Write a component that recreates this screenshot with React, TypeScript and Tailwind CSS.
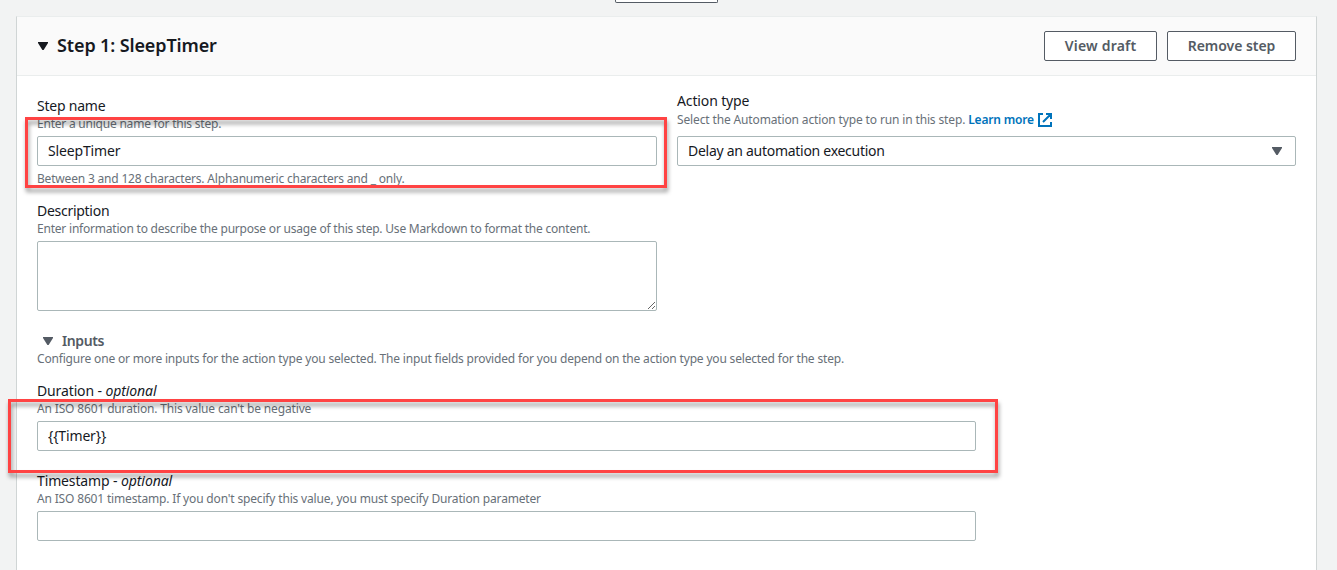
import type { ReactNode } from "react";

function Caret({ className }: { className: string }) {
  return (
    <svg viewBox="0 0 10 8" width="10" height="8" className={className} fill="currentColor" aria-hidden="true">
      <path d="M0 0h10v1L5.6 8H4.4L0 1z" />
    </svg>
  );
}

function Label({ children, optional, className = "tracking-[-0.13px]" }: { children: ReactNode; optional?: boolean; className?: string }) {
  return (
    <div className={`h-[18px] whitespace-nowrap text-[14px] leading-[18px] text-[#16191f] ${className}`}>
      {children}
      {optional && (
        <span className="tracking-[-0.1px]">
          {" - "}
          <i>optional</i>
        </span>
      )}
    </div>
  );
}

function Hint({ children, className = "tracking-[-0.2px]" }: { children: ReactNode; className?: string }) {
  return (
    <div className={`h-[18px] whitespace-nowrap text-[12px] leading-[18px] text-[#687078] ${className}`}>{children}</div>
  );
}

function TextInput({ value }: { value: string }) {
  return (
    <input
      defaultValue={value}
      className="mt-[3px] block h-[30px] w-full rounded-[2px] border border-[#aab7b8] bg-white px-[10px] pb-[2px] text-[14px] tracking-[-0.15px] text-[#16191f] outline-none"
    />
  );
}

function ActionButton({ children, className }: { children: ReactNode; className: string }) {
  return (
    <button
      className={`h-[30px] whitespace-nowrap rounded-[2px] border border-[#545b64] bg-white text-[14px] font-semibold leading-[28px] text-[#545b64] ${className}`}
    >
      {children}
    </button>
  );
}

export default function App() {
  return (
    <div className="relative h-[570px] w-[1337px] overflow-hidden bg-[#f2f3f3] font-['Noto_Sans','Open_Sans',sans-serif]">
      <div className="ml-[615px] h-[3px] w-[103px] rounded-b-[2px] border border-t-0 border-[#545b64] bg-white" />
      <section className="ml-4 mt-[13px] h-[600px] w-[1301px] border border-[#d0d5d5] border-t-[#eaeded] bg-white">
        <header className="flex h-[59px] items-center border-b border-[#eaeded] bg-[#fafafa] pl-[21px] pr-5">
          <Caret className="text-[#16191f]" />
          <h2 className="mb-[2px] ml-[9px] whitespace-nowrap text-[18px] font-semibold leading-[22px] tracking-[-0.12px] text-[#16191f]">Step 1: SleepTimer</h2>
          <div className="ml-auto flex gap-[10px]">
            <ActionButton className="w-[113px] tracking-[0.2px]">View draft</ActionButton>
            <ActionButton className="w-[129px] tracking-[-0.05px]">Remove step</ActionButton>
          </div>
        </header>

        <div className="pl-5 pr-5">
          <div className="flex gap-5">
            <div className="w-[620px] pt-[21px]">
              <Label className="tracking-[-0.22px]">Step name</Label>
              <Hint className="tracking-[-0.22px]">Enter a unique name for this step.</Hint>
              <TextInput value="SleepTimer" />
              <div className="mt-1">
                <Hint className="tracking-[-0.19px]">Between 3 and 128 characters. Alphanumeric characters and _ only.</Hint>
              </div>
              <div className="mt-[14px]">
                <Label className="tracking-[-0.28px]">Description</Label>
                <Hint className="tracking-[-0.21px]">
                  Enter information to describe the purpose or usage of this step. Use Markdown to format the content.
                </Hint>
                <textarea className="mt-[3px] block h-[70px] w-full resize rounded-[2px] border border-[#aab7b8] bg-white outline-none" />
              </div>
            </div>
            <div className="w-[619px] pt-4">
              <Label>Action type</Label>
              <div className="mt-px flex items-center">
                <Hint className="tracking-[-0.14px]">Select the Automation action type to run in this step.</Hint>
                <a className="ml-[3px] flex h-[18px] items-center whitespace-nowrap text-[12px] font-semibold leading-[18px] tracking-[-0.18px] text-[#0073bb]">
                  Learn more
                  <svg width="14" height="14" viewBox="0 0 14 14" className="ml-1" fill="none" stroke="currentColor" strokeWidth="2" aria-hidden="true">
                    <path d="M5 1H1v12h12V9M8 1h5v5M12.5 1.5L5 9" />
                  </svg>
                </a>
              </div>
              <div className="mt-[7px] flex h-[30px] items-center justify-between rounded-[2px] border border-[#aab7b8] pl-[10px] pr-[13px] text-[14px] tracking-[-0.28px] text-[#16191f]">
                <span className="pb-[2px]">Delay an automation execution</span>
                <Caret className="text-[#545b64]" />
              </div>
            </div>
          </div>

          <div className="mt-[21px] flex h-[18px] items-center pl-[6px] text-[14px] font-semibold leading-[18px] tracking-[-0.4px] text-[#545b64]">
            <Caret className="mr-[9px]" />
            Inputs
          </div>
          <Hint className="tracking-[-0.178px]">
            Configure one or more inputs for the action type you selected. The input fields provided for you depend on the action type you selected for the step.
          </Hint>

          <div className="mt-[14px] w-[939px]">
            <Label optional>Duration</Label>
            <Hint className="tracking-[-0.15px]">An ISO 8601 duration. This value can't be negative</Hint>
            <TextInput value="{{Timer}}" />
          </div>
          <div className="mt-[21px] w-[939px]">
            <Label optional>Timestamp</Label>
            <Hint className="tracking-[-0.166px]">
              An ISO 8601 timestamp. If you don't specify this value, you must specify Duration parameter
            </Hint>
            <TextInput value="" />
          </div>
        </div>
      </section>

      <div className="pointer-events-none absolute left-[25px] top-[117px] h-[71px] w-[642px] border-[3px] border-[#ff4343] drop-shadow-[1px_4px_2px_rgba(0,0,0,0.4)]" />
      <div className="pointer-events-none absolute left-[8px] top-[399px] h-[74px] w-[990px] border-[3px] border-[#ff4343] drop-shadow-[1px_4px_2px_rgba(0,0,0,0.4)]" />
    </div>
  );
}
